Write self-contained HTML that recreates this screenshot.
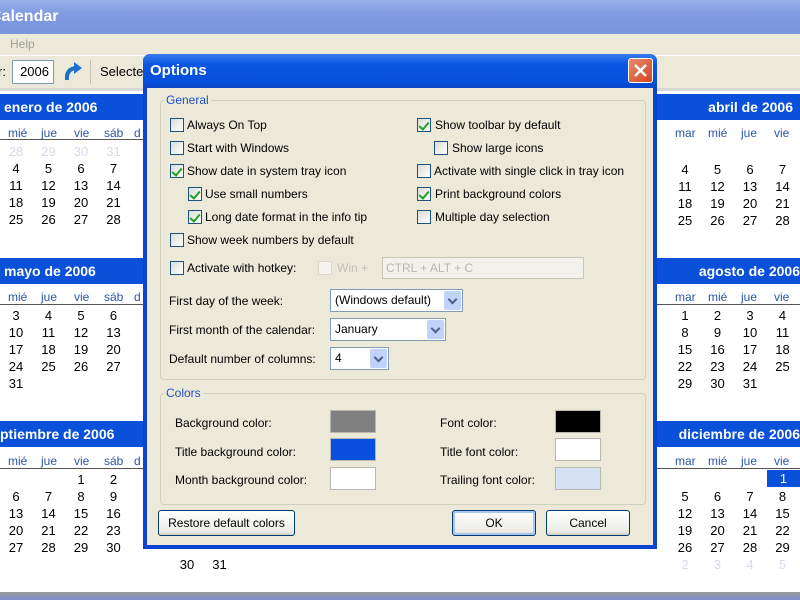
<!DOCTYPE html>
<html><head><meta charset="utf-8"><style>
*{margin:0;padding:0;box-sizing:border-box}
body{width:800px;height:600px;overflow:hidden;position:relative;background:#fff;font-family:"Liberation Sans",sans-serif;font-size:12px;color:#000}
.a{position:absolute;white-space:nowrap}
.mh{position:absolute;background:#0a50d8;color:#fff;font-weight:bold;font-size:14px;height:26px;line-height:26px}
.dn{position:absolute;color:#2a56a8;font-size:12px}
.n{position:absolute;font-size:13px;width:24px;text-align:center}
.cb{position:absolute;width:14px;height:14px;border:1px solid #1c5180;background:linear-gradient(135deg,#dcdcd6,#fff)}
.cb.c::after{content:"";position:absolute;left:3px;top:1px;width:4px;height:8px;border:solid #21a121;border-width:0 2px 2px 0;transform:rotate(40deg)}
.gb{position:absolute;border:1px solid #d0d0bf;border-radius:4px}
.gl{position:absolute;color:#1f50c8;background:#ece9d8;padding:0 2px}
.combo{position:absolute;background:#fff;border:1px solid #7f9db9;height:23px;line-height:21px;padding-left:4px}
.combo i{position:absolute;right:1px;top:1px;width:17px;height:19px;background:#c1d3fb;border-radius:2px}
.combo i::after{content:"";position:absolute;left:5px;top:5px;width:5px;height:5px;border:solid #4d6185;border-width:0 2px 2px 0;transform:rotate(45deg)}
.sw{position:absolute;width:46px;height:23px;border:1px solid #b8b8b0}
.btn{position:absolute;height:26px;border:1px solid #003c74;border-radius:3px;background:linear-gradient(#fff,#ecebe6 85%,#d6d0c5);text-align:center;line-height:24px}
</style></head><body>
<div class="a" style="left:0;top:0;width:800px;height:34px;background:linear-gradient(#9bb3ec,#7f9ae0 40%,#7a96dd)"></div>
<div class="a" style="left:-10px;top:8px;color:#fff;font-weight:bold;font-size:16px">Calendar</div>
<div class="a" style="left:0;top:34px;width:800px;height:54px;background:#ece9d8"></div>
<div class="a" style="left:10px;top:37px;color:#a0a0a0">Help</div>
<div class="a" style="left:0;top:55px;width:800px;height:1px;background:#fff"></div>
<div class="a" style="left:-2px;top:64px;font-size:13px">r:</div>
<div class="a" style="left:12px;top:60px;width:42px;height:24px;background:#fff;border:1px solid #7f9db9;text-align:right;padding-right:4px;line-height:22px;font-size:13px">2006</div>
<svg class="a" style="left:62px;top:60px" width="22" height="24"><path d="M5 20 Q4 9 14 8" stroke="#1f6fc8" stroke-width="4" fill="none"/><path d="M12 2 L20 8 L12 14 Z" fill="#1f6fc8"/></svg>
<div class="a" style="left:90px;top:60px;width:1px;height:24px;background:#c5c2b2"></div>
<div class="a" style="left:100px;top:64px;font-size:13px">Selecte</div>
<div class="a" style="left:0;top:88px;width:800px;height:3px;background:#d8d8d8"></div>

<div class="mh" style="left:0;top:94px;width:150px;padding-left:4px">enero de 2006</div>
<div class="mh" style="left:0;top:258px;width:150px;padding-left:4px">mayo de 2006</div>
<div class="mh" style="left:0;top:421px;width:150px;padding-left:0">ptiembre de 2006</div>
<div class="mh" style="left:655px;top:94px;width:145px;text-align:right;padding-right:7px">abril de 2006</div>
<div class="mh" style="left:655px;top:258px;width:145px;text-align:right;padding-right:0">agosto de 2006</div>
<div class="mh" style="left:655px;top:421px;width:145px;text-align:right;padding-right:0">diciembre de 2006</div>

<div class="a" style="left:0;top:139px;width:150px;height:1px;background:#555"></div>
<div class="a" style="left:0;top:304px;width:150px;height:1px;background:#555"></div>
<div class="a" style="left:0;top:468px;width:150px;height:1px;background:#555"></div>
<div class="a" style="left:655px;top:304px;width:145px;height:1px;background:#555"></div>
<div class="a" style="left:655px;top:468px;width:145px;height:1px;background:#555"></div>

<div class="dn" style="left:8px;top:126px">mié</div><div class="dn" style="left:41px;top:126px">jue</div><div class="dn" style="left:74px;top:126px">vie</div><div class="dn" style="left:104px;top:126px">sáb</div><div class="dn" style="left:134px;top:126px">d</div>
<div class="dn" style="left:8px;top:290px">mié</div><div class="dn" style="left:41px;top:290px">jue</div><div class="dn" style="left:74px;top:290px">vie</div><div class="dn" style="left:104px;top:290px">sáb</div><div class="dn" style="left:134px;top:290px">d</div>
<div class="dn" style="left:8px;top:454px">mié</div><div class="dn" style="left:41px;top:454px">jue</div><div class="dn" style="left:74px;top:454px">vie</div><div class="dn" style="left:104px;top:454px">sáb</div><div class="dn" style="left:134px;top:454px">d</div>
<div class="dn" style="left:675px;top:126px">mar</div><div class="dn" style="left:708px;top:126px">mié</div><div class="dn" style="left:741px;top:126px">jue</div><div class="dn" style="left:774px;top:126px">vie</div>
<div class="dn" style="left:675px;top:290px">mar</div><div class="dn" style="left:708px;top:290px">mié</div><div class="dn" style="left:741px;top:290px">jue</div><div class="dn" style="left:774px;top:290px">vie</div>
<div class="dn" style="left:675px;top:454px">mar</div><div class="dn" style="left:708px;top:454px">mié</div><div class="dn" style="left:741px;top:454px">jue</div><div class="dn" style="left:774px;top:454px">vie</div>

<div id="cals"></div>
<script>
function g(x0,y0,rows){let h='';rows.forEach((r,ri)=>r.forEach((v,ci)=>{if(v!=='')h+=`<div class="n" style="left:${x0+ci*32.5}px;top:${y0+ri*17}px;${typeof v==='string'&&v[0]=='t'?'color:#d4dcec':''}">${String(v).replace('t','')}</div>`}));return h;}
let h='';
h+=g(4,144,[['t28','t29','t30','t31'],[4,5,6,7],[11,12,13,14],[18,19,20,21],[25,26,27,28]]);
h+=g(4,308,[[3,4,5,6],[10,11,12,13],[17,18,19,20],[24,25,26,27],[31,'','','']]);
h+=g(4,472,[['','',1,2],[6,7,8,9],[13,14,15,16],[20,21,22,23],[27,28,29,30]]);
h+=g(673,162,[[4,5,6,7],[11,12,13,14],[18,19,20,21],[25,26,27,28]]);
h+=g(673,308,[[1,2,3,4],[8,9,10,11],[15,16,17,18],[22,23,24,25],[29,30,31,'']]);
h+=g(673,489,[[5,6,7,8],[12,13,14,15],[19,20,21,22],[26,27,28,29],['t2','t3','t4','t5']]);
h+=g(175,557,[[30,31]]);
document.getElementById('cals').innerHTML=h;
</script>
<div class="a" style="left:767px;top:470px;width:33px;height:17px;background:#0a50d8;color:#fff;text-align:center;font-size:13px;line-height:17px">1</div>
<div class="a" style="left:0;top:592px;width:800px;height:8px;background:linear-gradient(#9a9a9a,#7a8ed0)"></div>

<div class="a" style="left:143px;top:54px;width:514px;height:495px;background:#0a44d0;border-radius:7px 7px 0 0"></div>
<div class="a" style="left:143px;top:54px;width:514px;height:34px;background:linear-gradient(#3a7cf0,#0b56e0 30%,#0550dc 80%,#0846c8);border-radius:7px 7px 0 0"></div>
<div class="a" style="left:150px;top:62px;color:#fff;font-weight:bold;font-size:15px">Options</div>
<div class="a" style="left:628px;top:58px;width:25px;height:25px;background:linear-gradient(135deg,#e98a6e,#d2461f);border:1px solid #fff;border-radius:3px"></div>
<svg class="a" style="left:628px;top:58px" width="25" height="25"><path d="M7 7 L18 18 M18 7 L7 18" stroke="#fff" stroke-width="2.5"/></svg>
<div class="a" style="left:147px;top:88px;width:506px;height:457px;background:#ece9d8"></div>

<div class="gb" style="left:160px;top:100px;width:486px;height:280px"></div>
<div class="gl" style="left:164px;top:93px">General</div>
<div class="gb" style="left:160px;top:393px;width:486px;height:112px"></div>
<div class="gl" style="left:164px;top:386px">Colors</div>

<div class="cb" style="left:170px;top:118px"></div><div class="a" style="left:187px;top:118px">Always On Top</div>
<div class="cb" style="left:170px;top:141px"></div><div class="a" style="left:187px;top:141px">Start with Windows</div>
<div class="cb c" style="left:170px;top:164px"></div><div class="a" style="left:187px;top:164px">Show date in system tray icon</div>
<div class="cb c" style="left:188px;top:187px"></div><div class="a" style="left:205px;top:187px">Use small numbers</div>
<div class="cb c" style="left:188px;top:210px"></div><div class="a" style="left:205px;top:210px">Long date format in the info tip</div>
<div class="cb" style="left:170px;top:233px"></div><div class="a" style="left:187px;top:233px">Show week numbers by default</div>
<div class="cb" style="left:170px;top:261px"></div><div class="a" style="left:187px;top:261px">Activate with hotkey:</div>
<div class="a" style="left:318px;top:261px;width:14px;height:14px;border:1px solid #d8d8ce;background:#f4f3ee"></div>
<div class="a" style="left:337px;top:261px;color:#c0c0b8">Win +</div>
<div class="a" style="left:382px;top:257px;width:202px;height:22px;border:1px solid #c9c7ba;background:#f2f1ea;color:#b8b8b0;padding-left:3px;line-height:20px">CTRL + ALT + C</div>

<div class="cb c" style="left:417px;top:118px"></div><div class="a" style="left:435px;top:118px">Show toolbar by default</div>
<div class="cb" style="left:434px;top:141px"></div><div class="a" style="left:452px;top:141px">Show large icons</div>
<div class="cb" style="left:417px;top:164px"></div><div class="a" style="left:434px;top:164px">Activate with single click in tray icon</div>
<div class="cb c" style="left:417px;top:187px"></div><div class="a" style="left:435px;top:187px">Print background colors</div>
<div class="cb" style="left:417px;top:210px"></div><div class="a" style="left:435px;top:210px">Multiple day selection</div>

<div class="a" style="left:169px;top:294px">First day of the week:</div>
<div class="combo" style="left:330px;top:289px;width:133px">(Windows default)<i></i></div>
<div class="a" style="left:169px;top:323px">First month of the calendar:</div>
<div class="combo" style="left:330px;top:318px;width:116px">January<i></i></div>
<div class="a" style="left:169px;top:352px">Default number of columns:</div>
<div class="combo" style="left:330px;top:347px;width:59px">4<i></i></div>

<div class="a" style="left:175px;top:416px">Background color:</div><div class="sw" style="left:330px;top:410px;background:#808080"></div>
<div class="a" style="left:175px;top:445px">Title background color:</div><div class="sw" style="left:330px;top:438px;background:#0a50e0"></div>
<div class="a" style="left:175px;top:473px">Month background color:</div><div class="sw" style="left:330px;top:467px;background:#fff"></div>
<div class="a" style="left:440px;top:416px">Font color:</div><div class="sw" style="left:555px;top:410px;background:#000"></div>
<div class="a" style="left:440px;top:445px">Title font color:</div><div class="sw" style="left:555px;top:438px;background:#fff"></div>
<div class="a" style="left:440px;top:473px">Trailing font color:</div><div class="sw" style="left:555px;top:467px;background:#d6e2f4"></div>

<div class="btn" style="left:158px;top:510px;width:137px">Restore default colors</div>
<div class="btn" style="left:452px;top:510px;width:84px;box-shadow:inset 0 0 0 2px #a9c4f0">OK</div>
<div class="btn" style="left:546px;top:510px;width:84px">Cancel</div>
</body></html>
